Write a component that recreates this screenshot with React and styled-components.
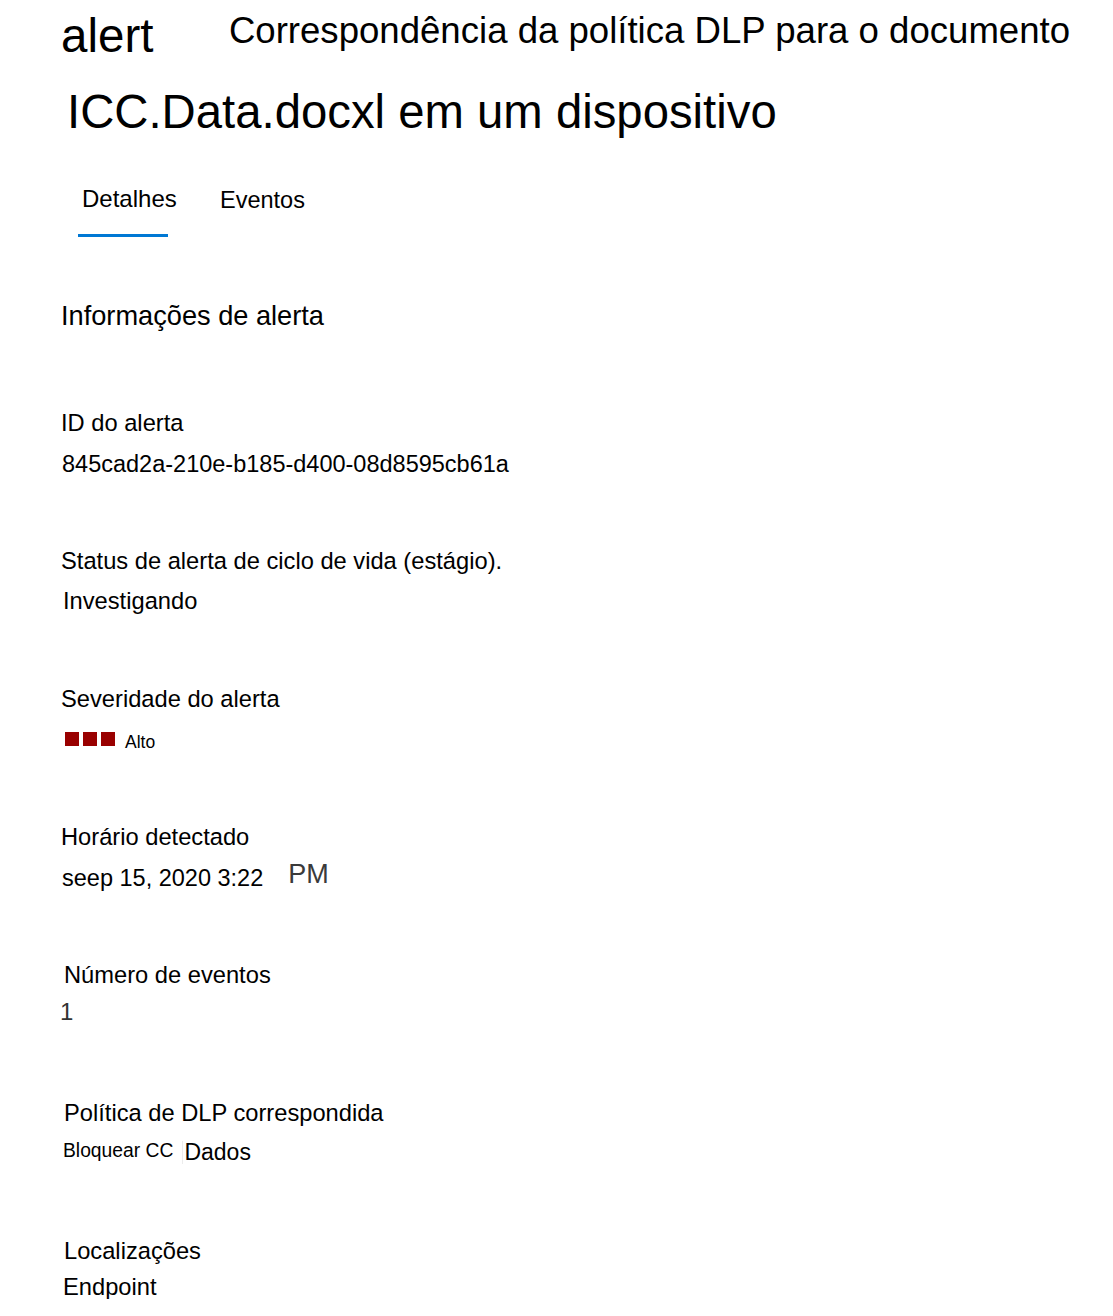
import React from "react";
import styled, { createGlobalStyle } from "styled-components";

const GlobalStyle = createGlobalStyle`
  html, body {
    margin: 0;
    padding: 0;
    background: #ffffff;
  }
  body {
    font-family: "Liberation Sans", Arial, sans-serif;
    color: #000000;
  }
  * { box-sizing: border-box; }
`;

const Page = styled.main`
  padding: 12px 0 0 61px;
  line-height: 1;
  font-family: "Liberation Sans", Arial, sans-serif;
  color: #000;
`;

const TitleRow = styled.div`
  display: flex;
  align-items: flex-start;
  gap: 75.5px;
  white-space: nowrap;
`;

const Eyebrow = styled.span`
  font-size: 47.5px;
  line-height: 1;
`;

const Subtitle = styled.span`
  margin-top: 1px;
  font-size: 36.6px;
  line-height: 1;
`;

const Title = styled.h1`
  margin: 28.5px 0 0 6px;
  font-size: 47.3px;
  font-weight: 400;
  line-height: 1;
  white-space: nowrap;
`;

const TabBar = styled.nav`
  display: flex;
  align-items: flex-start;
  gap: 48px;
  margin: 51.5px 0 0 17px;
`;

const Tab = styled.div`
  width: ${(p) => (p.$active ? "90px" : "auto")};
  padding: 0 0 ${(p) => (p.$active ? 23.5 : 21.5)}px 4px;
  margin-top: ${(p) => (p.$active ? 0 : 2)}px;
  border-bottom: 3px solid ${(p) => (p.$active ? "#0078d4" : "transparent")};
  font-size: ${(p) => (p.$active ? 24 : 23.5)}px;
  line-height: 1;
  white-space: nowrap;
  color: #000;
`;

const SectionHeading = styled.h2`
  margin: 64.5px 0 0 0;
  font-size: 27.2px;
  font-weight: 400;
  line-height: 1;
`;

const FieldList = styled.section`
  display: flex;
  flex-direction: column;
  margin-top: 83px;
`;

const Field = styled.div`
  display: flex;
  flex-direction: column;
  align-items: flex-start;
  min-height: 138px;
  padding-left: ${(p) => p.$indent || 0}px;
  &:last-child {
    min-height: 0;
  }
`;

const Label = styled.div`
  font-size: 23.7px;
  line-height: 1;
  white-space: nowrap;
`;

const Value = styled.div`
  margin-top: ${(p) => p.$gap}px;
  margin-left: ${(p) => p.$shift || 0}px;
  font-size: ${(p) => p.$size || 23.7}px;
  color: ${(p) => p.$color || "#000"};
  line-height: 1;
  white-space: nowrap;
`;

const ValueRow = styled.div`
  display: flex;
  align-items: flex-start;
  gap: ${(p) => p.$spacing}px;
  margin-top: ${(p) => p.$gap}px;
  margin-left: ${(p) => p.$shift || 0}px;
  white-space: nowrap;
`;

const Squares = styled.div`
  display: flex;
  gap: 4px;
`;

const Square = styled.span`
  display: block;
  width: 14px;
  height: 14px;
  background: #990000;
`;

const Part = styled.span`
  display: block;
  margin-top: ${(p) => p.$top || 0}px;
  font-size: ${(p) => p.$size}px;
  color: ${(p) => p.$color || "#000"};
  line-height: 1;
  ${(p) => (p.$divider ? "border-left: 1px solid #ececec; padding-left: 1px;" : "")}
`;

export default function App() {
  return (
    <>
      <GlobalStyle />
      <Page>
        <TitleRow>
          <Eyebrow>alert</Eyebrow>
          <Subtitle>Correspondência da política DLP para o documento</Subtitle>
        </TitleRow>
        <Title>ICC.Data.docxl em um dispositivo</Title>

        <TabBar>
          <Tab $active>Detalhes</Tab>
          <Tab>Eventos</Tab>
        </TabBar>

        <SectionHeading>Informações de alerta</SectionHeading>

        <FieldList>
          <Field>
            <Label>ID do alerta</Label>
            <Value $gap={17} $size={23.5} $shift={1}>845cad2a-210e-b185-d400-08d8595cb61a</Value>
          </Field>

          <Field>
            <Label>Status de alerta de ciclo de vida (estágio).</Label>
            <Value $gap={16} $shift={2}>Investigando</Value>
          </Field>

          <Field>
            <Label>Severidade do alerta</Label>
            <ValueRow $gap={20.5} $shift={4} $spacing={10}>
              <Squares>
                <Square />
                <Square />
                <Square />
              </Squares>
              <Part $size={17.5} $top={2}>Alto</Part>
            </ValueRow>
          </Field>

          <Field>
            <Label>Horário detectado</Label>
            <ValueRow $gap={11.5} $shift={1} $spacing={25}>
              <Part $size={23.5} $top={6}>seep 15, 2020 3:22</Part>
              <Part $size={27} $color="#3a3a3a">PM</Part>
            </ValueRow>
          </Field>

          <Field $indent={3}>
            <Label>Número de eventos</Label>
            <Value $gap={12} $shift={-4} $size={24} $color="#333333">1</Value>
          </Field>

          <Field $indent={3}>
            <Label>Política de DLP correspondida</Label>
            <ValueRow $gap={15} $shift={-1} $spacing={9}>
              <Part $size={19.3}>Bloquear CC</Part>
              <Part $size={23} $top={0} $divider>Dados</Part>
            </ValueRow>
          </Field>

          <Field $indent={3}>
            <Label>Localizações</Label>
            <Value $gap={12} $shift={-1}>Endpoint</Value>
          </Field>
        </FieldList>
      </Page>
    </>
  );
}
